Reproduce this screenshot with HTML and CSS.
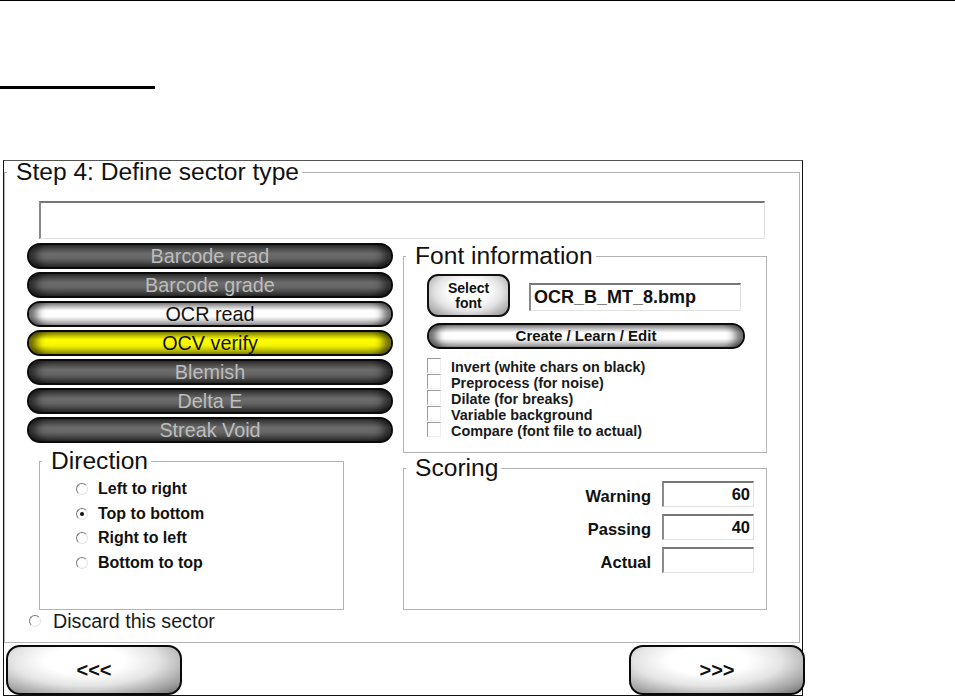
FILE: index.html
```html
<!DOCTYPE html>
<html lang="en">
<head>
  <meta charset="UTF-8" />
  <title>Step 4: Define sector type</title>
  <link rel="stylesheet" href="styles.css">
</head>
<body>
  <div class="top-rule"></div>
  <div class="heading-rule"></div>

  <div class="screen">
    <fieldset class="group main-group">
      <legend>Step 4: Define sector type</legend>
      <div class="textbox name-box"></div>

      <div class="columns">
        <div class="left-col">
          <div class="pill-list">
            <div class="pill">Barcode read</div>
            <div class="pill">Barcode grade</div>
            <div class="pill pill-light">OCR read</div>
            <div class="pill pill-yellow">OCV verify</div>
            <div class="pill">Blemish</div>
            <div class="pill">Delta E</div>
            <div class="pill">Streak Void</div>
          </div>

          <fieldset class="group direction-group">
            <legend>Direction</legend>
            <div class="radio-list">
              <label class="radio-row"><span class="radio"></span>Left to right</label>
              <label class="radio-row"><span class="radio checked"></span>Top to bottom</label>
              <label class="radio-row"><span class="radio"></span>Right to left</label>
              <label class="radio-row"><span class="radio"></span>Bottom to top</label>
            </div>
          </fieldset>

          <label class="discard-row"><span class="radio"></span>Discard this sector</label>
        </div>

        <div class="right-col">
          <fieldset class="group font-group">
            <legend>Font information</legend>
            <div class="font-row">
              <div class="select-btn"><span>Select</span><span>font</span></div>
              <div class="textbox file-box">OCR_B_MT_8.bmp</div>
            </div>
            <div class="pill pill-light create-btn">Create / Learn / Edit</div>
            <div class="check-list">
              <label class="check-row"><span class="check"></span>Invert (white chars on black)</label>
              <label class="check-row"><span class="check"></span>Preprocess (for noise)</label>
              <label class="check-row"><span class="check"></span>Dilate (for breaks)</label>
              <label class="check-row"><span class="check"></span>Variable background</label>
              <label class="check-row"><span class="check"></span>Compare (font file to actual)</label>
            </div>
          </fieldset>

          <fieldset class="group scoring-group">
            <legend>Scoring</legend>
            <div class="score-list">
              <div class="score-row"><span>Warning</span><div class="textbox score-box">60</div></div>
              <div class="score-row"><span>Passing</span><div class="textbox score-box">40</div></div>
              <div class="score-row"><span>Actual</span><div class="textbox score-box"></div></div>
            </div>
          </fieldset>
        </div>
      </div>
    </fieldset>

    <div class="nav-row">
      <div class="nav-btn">&lt;&lt;&lt;</div>
      <div class="nav-btn">&gt;&gt;&gt;</div>
    </div>
  </div>
</body>
</html>
```

FILE: styles.css
```css
* {
  box-sizing: border-box;
}

body {
  margin: 0;
  background: #fff;
  color: #111;
  font-family: 'Liberation Sans', Arial, sans-serif;
}

.top-rule {
  height: 1px;
  background: #000;
}

.heading-rule {
  margin-top: 85px;
  width: 155px;
  height: 3px;
  background: #000;
}

.screen {
  margin: 71px 0 0 3px;
  width: 800px;
  height: 536px;
  border: 1px solid #111;
  border-top-color: #555;
}

/* group boxes */
.group {
  margin: 0;
  padding: 0;
  min-width: 0;
  border: 1px solid #b4b4b4;
}

.group legend {
  margin-left: 2px;
  padding: 0 3px 0 9px;
  font-size: 24.6px;
  line-height: 22px;
  color: #111;
}

.main-group {
  width: 796px;
  height: 482px;
}

.textbox {
  background: #fff;
  border-style: solid;
  border-width: 2px 1px 1px 2px;
  border-color: #777 #e2e2e2 #e2e2e2 #8a8a8a;
}

.name-box {
  margin: 18px 0 0 34px;
  width: 726px;
  height: 38px;
}

.columns {
  display: grid;
  grid-template-columns: 366px 364px;
  column-gap: 10px;
  margin: 4px 0 0 22px;
}

/* sector type pills */
.pill-list {
  display: flex;
  flex-direction: column;
  gap: 3px;
}

.pill {
  height: 26px;
  border: 2px solid #0a0a0a;
  border-radius: 14px;
  background: linear-gradient(#323232, #6c6c6c 40%, #646464 62%, #2c2c2c);
  box-shadow: inset 12px 0 8px -5px rgba(0, 0, 0, 0.6), inset -12px 0 8px -5px rgba(0, 0, 0, 0.6);
  color: #bdbdbd;
  font-size: 19.8px;
  line-height: 22px;
  text-align: center;
}

.pill-light {
  background: linear-gradient(#8a8a8a, #fff 35%, #fdfdfd 62%, #9c9c9c);
  color: #111;
}

.pill-yellow {
  background: linear-gradient(#888800, #ffff00 35%, #f4f400 62%, #959500);
  color: #111;
}

/* direction */
.direction-group {
  margin: 7px 0 0 12px;
  width: 305px;
  height: 160px;
}

.radio-list {
  padding: 5px 0 0 36px;
}

.radio-row {
  display: flex;
  align-items: center;
  gap: 10px;
  height: 24.5px;
  font-size: 16px;
  font-weight: bold;
}

.radio {
  position: relative;
  flex: none;
  width: 12px;
  height: 12px;
  border-radius: 50%;
  border: 1px solid;
  border-color: #777 #e4e4e4 #e4e4e4 #777;
  background: #fff;
}

.radio.checked::after {
  content: "";
  position: absolute;
  left: 3px;
  top: 3px;
  width: 4px;
  height: 4px;
  border-radius: 50%;
  background: #111;
}

.discard-row {
  display: flex;
  align-items: center;
  gap: 12px;
  height: 20px;
  margin-top: 1px;
  padding-left: 2px;
  font-size: 19.7px;
  color: #1a1a1a;
}

/* font information */
.right-col {
  padding-top: 2px;
}

.font-group {
  width: 364px;
  height: 208px;
}

.font-row {
  display: flex;
  align-items: center;
  margin: 7px 0 0 23px;
}

.select-btn {
  display: flex;
  flex-direction: column;
  align-items: center;
  justify-content: center;
  width: 83px;
  height: 43px;
  border: 2px solid #111;
  border-radius: 11px;
  background: radial-gradient(ellipse at 50% 40%, #fff 35%, #e2e2e2 60%, #8c8c8c 100%);
  font-size: 14px;
  font-weight: bold;
  line-height: 15px;
}

.file-box {
  margin: 3px 0 0 19px;
  width: 212px;
  height: 28px;
  padding-left: 3px;
  font-size: 18px;
  font-weight: bold;
  line-height: 25px;
}

.create-btn {
  margin: 6px 0 0 23px;
  width: 318px;
  font-size: 15px;
  font-weight: bold;
}

.check-list {
  margin: 10px 0 0 23px;
}

.check-row {
  display: flex;
  align-items: center;
  gap: 10px;
  height: 16px;
  font-size: 14.4px;
  font-weight: bold;
  color: #1a1a1a;
}

.check {
  flex: none;
  width: 14px;
  height: 15px;
  margin-top: -3px;
  border-style: solid;
  border-width: 1px;
  border-color: #9a9a9a #eee #eee #9a9a9a;
}

/* scoring */
.scoring-group {
  margin-top: 4px;
  width: 364px;
  height: 153px;
}

.score-list {
  display: flex;
  flex-direction: column;
  gap: 7px;
  padding: 2px 12px 0 0;
}

.score-row {
  display: flex;
  justify-content: flex-end;
  align-items: center;
  gap: 11px;
  font-size: 16.5px;
  font-weight: bold;
}

.score-row span {
  padding-top: 5px;
}

.score-box {
  width: 92px;
  height: 26px;
  padding-right: 3px;
  text-align: right;
  line-height: 22px;
}

/* bottom navigation */
.nav-row {
  display: flex;
  justify-content: space-between;
  margin: 2px -3px 0 2px;
}

.nav-btn {
  width: 176px;
  height: 50px;
  border: 2px solid #0a0a0a;
  border-radius: 14px;
  background: radial-gradient(ellipse at 45% 30%, #fff 30%, #e4e4e4 55%, #9a9a9a 85%, #6a6a6a 100%);
  font-size: 20px;
  font-weight: bold;
  line-height: 46px;
  text-align: center;
}
```
